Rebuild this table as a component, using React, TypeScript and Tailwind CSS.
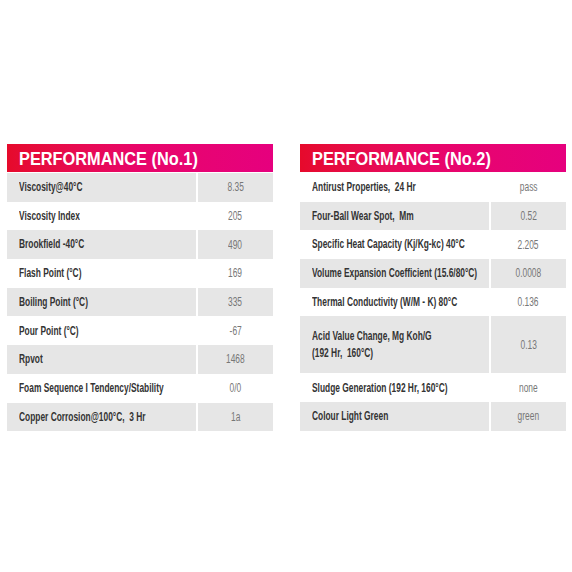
import React from "react";

type Row = { label: React.ReactNode; value: string; tall?: boolean };

const left: Row[] = [
  { label: "Viscosity@40°C", value: "8.35" },
  { label: "Viscosity Index", value: "205" },
  { label: "Brookfield -40°C", value: "490" },
  { label: "Flash Point (°C)", value: "169" },
  { label: "Boiling Point (°C)", value: "335" },
  { label: "Pour Point (°C)", value: "-67" },
  { label: "Rpvot", value: "1468" },
  { label: "Foam Sequence I Tendency/Stability", value: "0/0" },
  { label: "Copper Corrosion@100°C,  3 Hr", value: "1a" },
];

const right: Row[] = [
  { label: "Antirust Properties,  24 Hr", value: "pass" },
  { label: "Four-Ball Wear Spot,  Mm", value: "0.52" },
  { label: "Specific Heat Capacity (Kj/Kg-kc) 40°C", value: "2.205" },
  { label: "Volume Expansion Coefficient (15.6/80°C)", value: "0.0008" },
  { label: "Thermal Conductivity (W/M - K) 80°C", value: "0.136" },
  {
    label: (
      <>
        Acid Value Change, Mg Koh/G
        <br />
        (192 Hr,  160°C)
      </>
    ),
    value: "0.13",
    tall: true,
  },
  { label: "Sludge Generation (192 Hr, 160°C)", value: "none" },
  { label: "Colour Light Green", value: "green" },
];

const font = { fontFamily: '"Liberation Sans", Arial, sans-serif' };

function Table({ title, rows, startGray }: { title: string; rows: Row[]; startGray: boolean }) {
  return (
    <div className="flex flex-col w-[266px] shrink-0">
      <div className="h-[28px] flex items-center pl-[12px] bg-gradient-to-r from-[#e60a2b] via-[#e8056a] to-[#e6007e]">
        <span
          className="inline-block origin-left scale-x-[0.86] text-white font-bold text-[19px] leading-none whitespace-pre"
          style={font}
        >
          {title}
        </span>
      </div>
      <div className="h-[1px]" />
      {rows.map((r, i) => {
        const gray = startGray ? i % 2 === 0 : i % 2 === 1;
        const bg = gray ? "bg-[#e6e6e6]" : "bg-white";
        return (
          <div key={i} className={`flex ${r.tall ? "h-[57px]" : "h-[28.7px]"}`}>
            <div className={`flex-1 min-w-0 flex items-center pl-[12px] ${bg}`}>
              <span
                className={`inline-block origin-left scale-x-[0.67] text-[12.5px] text-[#333333] font-bold whitespace-pre ${r.tall ? "leading-[17px]" : "leading-none"}`}
                style={font}
              >
                {r.label}
              </span>
            </div>
            <div className="w-[2px] shrink-0 bg-white" />
            <div className={`w-[75px] shrink-0 flex items-center justify-center ${bg}`}>
              <span
                className="inline-block scale-x-[0.7] text-[12px] text-[#777777] leading-none"
                style={font}
              >
                {r.value}
              </span>
            </div>
          </div>
        );
      })}
    </div>
  );
}

export default function App() {
  return (
    <div className="w-[572px] h-[572px] bg-white flex items-start gap-[27px] pl-[7px] pt-[144px]">
      <Table title="PERFORMANCE (No.1)" rows={left} startGray={true} />
      <Table title="PERFORMANCE (No.2)" rows={right} startGray={false} />
    </div>
  );
}
